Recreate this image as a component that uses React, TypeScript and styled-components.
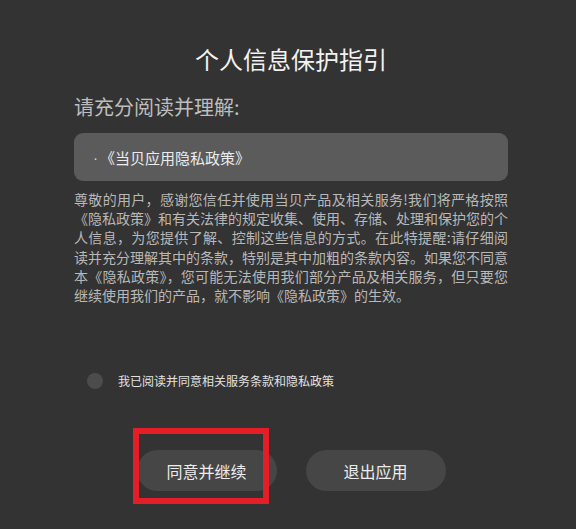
import React from "react";
import styled, { createGlobalStyle } from "styled-components";

const GlobalStyle = createGlobalStyle`
  html, body {
    margin: 0;
    padding: 0;
    background: #333333;
  }
  body {
    font-family: "Noto Sans CJK SC", "Noto Sans", sans-serif;
  }
`;

const Page = styled.div`
  min-height: 529px;
  background: #333333;
  padding-top: 43px;
  box-sizing: border-box;
`;

const Dialog = styled.div`
  width: 434px;
  margin-left: 74px;
  display: flex;
  flex-direction: column;
`;

const Title = styled.h1`
  margin: 0;
  font-size: 24px;
  line-height: 32px;
  font-weight: 400;
  color: #f2f2f2;
  text-align: center;
`;

const Subtitle = styled.h2`
  margin: 18px 0 0;
  font-size: 20px;
  line-height: 28px;
  font-weight: 400;
  color: #bdbdbd;
`;

const PolicyBox = styled.div`
  margin-top: 12px;
  height: 48px;
  border-radius: 9px;
  background: #5b5b5b;
  display: flex;
  align-items: center;
  padding-left: 19px;
  font-size: 15px;
  color: #ececec;
`;

const Dot = styled.span`
  font-family: "Liberation Sans", sans-serif;
  font-size: 15px;
  color: #d6d6d6;
  margin-right: 2px;
`;

const Paragraph = styled.div`
  margin-top: 9px;
  font-size: 14px;
  line-height: 19.2px;
  color: #b8b8b8;
`;

const Line = styled.div<{ $last?: boolean }>`
  white-space: nowrap;
  text-align: ${(p) => (p.$last ? "left" : "justify")};
  text-align-last: ${(p) => (p.$last ? "left" : "justify")};
`;

const AgreeRow = styled.label`
  margin-top: 68px;
  margin-left: 13px;
  display: flex;
  align-items: center;
  gap: 15px;
  height: 16px;
`;

const Radio = styled.span`
  width: 16px;
  height: 16px;
  border-radius: 50%;
  background: #4c4c4c;
  flex: none;
`;

const AgreeText = styled.span`
  font-size: 12px;
  line-height: 16px;
  color: #e2e2e2;
`;

const ButtonRow = styled.div`
  margin-top: 61px;
  display: flex;
  justify-content: center;
  gap: 29px;
`;

const ButtonWrap = styled.div`
  position: relative;
`;

const Button = styled.button`
  width: 140px;
  height: 41px;
  border: none;
  border-radius: 21px;
  background: #464646;
  color: #ececec;
  font-family: "Noto Sans CJK SC", sans-serif;
  font-size: 16px;
  padding: 0;
  cursor: pointer;
`;

const Highlight = styled.div`
  position: absolute;
  left: -4px;
  top: -22px;
  width: 136px;
  height: 76px;
  box-sizing: border-box;
  border: 6px solid #e41e26;
  pointer-events: none;
`;

const lines = [
  "尊敬的用户，感谢您信任并使用当贝产品及相关服务!我们将严格按照",
  "《隐私政策》和有关法律的规定收集、使用、存储、处理和保护您的个",
  "人信息，为您提供了解、控制这些信息的方式。在此特提醒:请仔细阅",
  "读并充分理解其中的条款，特别是其中加粗的条款内容。如果您不同意",
  "本《隐私政策》，您可能无法使用我们部分产品及相关服务，但只要您",
  "继续使用我们的产品，就不影响《隐私政策》的生效。",
];

export default function App() {
  return (
    <>
      <GlobalStyle />
      <Page>
        <Dialog>
          <Title>个人信息保护指引</Title>
          <Subtitle>请充分阅读并理解:</Subtitle>
          <PolicyBox>
            <Dot>·</Dot>《当贝应用隐私政策》
          </PolicyBox>
          <Paragraph>
            {lines.map((l, i) => (
              <Line key={i} $last={i === lines.length - 1}>
                {l}
              </Line>
            ))}
          </Paragraph>
          <AgreeRow>
            <Radio />
            <AgreeText>我已阅读并同意相关服务条款和隐私政策</AgreeText>
          </AgreeRow>
          <ButtonRow>
            <ButtonWrap>
              <Button>同意并继续</Button>
              <Highlight />
            </ButtonWrap>
            <ButtonWrap>
              <Button>退出应用</Button>
            </ButtonWrap>
          </ButtonRow>
        </Dialog>
      </Page>
    </>
  );
}
